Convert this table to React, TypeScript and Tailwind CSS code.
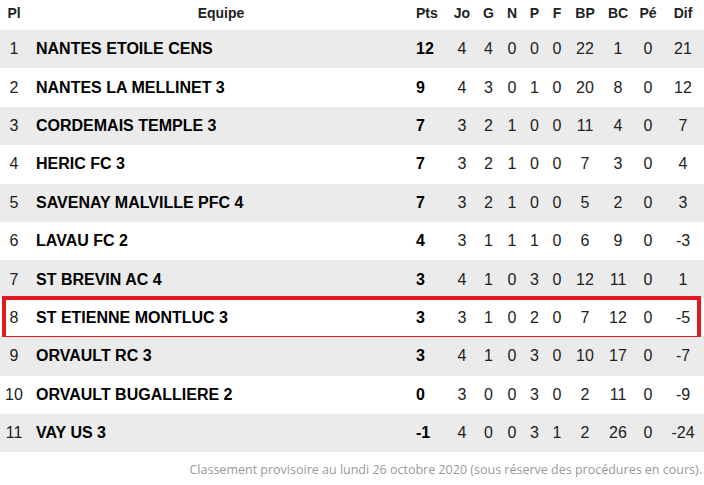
type Row = [number, string, number, number, number, number, number, number, number, number, number, number];

const rows: Row[] = [
  [1, "NANTES ETOILE CENS", 12, 4, 4, 0, 0, 0, 22, 1, 0, 21],
  [2, "NANTES LA MELLINET 3", 9, 4, 3, 0, 1, 0, 20, 8, 0, 12],
  [3, "CORDEMAIS TEMPLE 3", 7, 3, 2, 1, 0, 0, 11, 4, 0, 7],
  [4, "HERIC FC 3", 7, 3, 2, 1, 0, 0, 7, 3, 0, 4],
  [5, "SAVENAY MALVILLE PFC 4", 7, 3, 2, 1, 0, 0, 5, 2, 0, 3],
  [6, "LAVAU FC 2", 4, 3, 1, 1, 1, 0, 6, 9, 0, -3],
  [7, "ST BREVIN AC 4", 3, 4, 1, 0, 3, 0, 12, 11, 0, 1],
  [8, "ST ETIENNE MONTLUC 3", 3, 3, 1, 0, 2, 0, 7, 12, 0, -5],
  [9, "ORVAULT RC 3", 3, 4, 1, 0, 3, 0, 10, 17, 0, -7],
  [10, "ORVAULT BUGALLIERE 2", 0, 3, 0, 0, 3, 0, 2, 11, 0, -9],
  [11, "VAY US 3", -1, 4, 0, 0, 3, 1, 2, 26, 0, -24],
];

const cols = "grid grid-cols-[28px_378px_42px_28px_25px_22px_23px_22px_34px_32px_28px_42px]";
const stats = ["Jo", "G", "N", "P", "F", "BP", "BC", "Pé", "Dif"];

// team highlighted with the red frame
const OWN_TEAM = 8;

export default function App() {
  return (
    <div className="w-[704px] bg-white font-['Liberation_Sans',Arial,sans-serif] text-[#222]">
      <div className={`${cols} h-[30px] items-start pt-[3px] text-[14px] font-bold text-[#222]`}>
        <div className="text-center">Pl</div>
        <div className="pl-2 text-center">Equipe</div>
        <div className="pl-[10px]">Pts</div>
        {stats.map((s) => (
          <div key={s} className="text-center">
            {s}
          </div>
        ))}
      </div>
      {rows.map((r) => {
        const [pos, name, pts, ...rest] = r;
        return (
          <div key={pos} className="relative">
            <div
              className={`${cols} h-[38.4px] items-center text-[16px] ${pos % 2 === 1 ? "bg-[#ebebeb]" : "bg-white"}`}
            >
              <div className="text-center">{pos}</div>
              <div className="pl-2 font-bold text-black">{name}</div>
              <div className="pl-[10px] font-bold text-black">{pts}</div>
              {rest.map((v, i) => (
                <div key={i} className="text-center">
                  {v}
                </div>
              ))}
            </div>
            {pos === OWN_TEAM && (
              <div className="pointer-events-none absolute top-[-3px] bottom-[-3px] left-[2px] right-[3px] border-4 border-[#e3171f]" />
            )}
          </div>
        );
      })}
      <div className="mt-[9px] pr-[2px] text-right font-['Open_Sans',sans-serif] text-[12.5px] leading-[18px] text-[#999]">
        Classement provisoire au lundi 26 octobre 2020 (sous réserve des procédures en cours).
      </div>
    </div>
  );
}
